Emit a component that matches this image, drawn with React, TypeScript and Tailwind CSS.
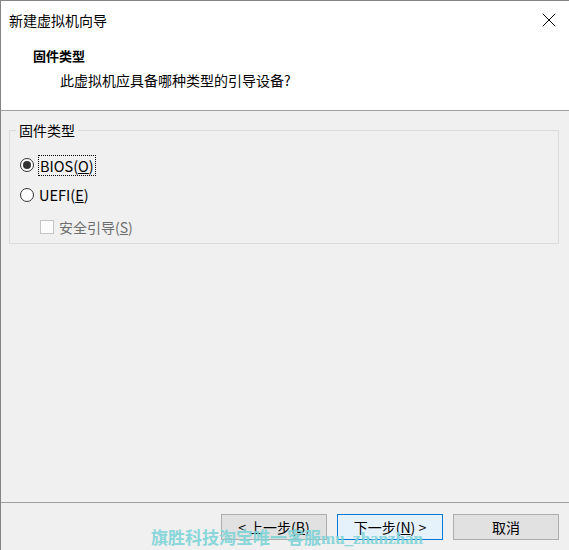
import { X } from "lucide-react";

const font = { fontFamily: '"Noto Sans CJK SC", "Noto Sans", sans-serif' };

function Radio({ checked }: { checked?: boolean }) {
  return (
    <span className="w-[14px] h-[14px] rounded-full border border-[#333333] bg-white flex items-center justify-center shrink-0">
      {checked && <span className="w-[8px] h-[8px] rounded-full bg-[#333333]" />}
    </span>
  );
}

function WizardButton({ children, primary }: { children: React.ReactNode; primary?: boolean }) {
  return (
    <button
      type="button"
      className={
        primary
          ? "w-[106px] h-[26px] border border-[#0078d7] bg-[#e5f1fb] text-[14px] leading-none text-black"
          : "w-[106px] h-[26px] border border-[#adadad] bg-[#e1e1e1] text-[14px] leading-none text-black"
      }
    >
      {children}
    </button>
  );
}

export default function App() {
  return (
    <div
      className="relative w-[569px] h-[550px] bg-[#f0f0f0] border-l border-t border-[#858585] flex flex-col overflow-hidden text-black"
      style={font}
    >
      {/* white header with title and page caption */}
      <div className="h-[110px] shrink-0 bg-white border-b border-[#a0a0a0] flex flex-col">
        <div className="h-[38px] flex items-center justify-between pl-[8px] pr-[8px]">
          <span className="text-[14px] leading-[20px]">新建虚拟机向导</span>
          <X className="w-[24px] h-[24px] text-black" strokeWidth={1} />
        </div>
        <div className="mt-[7px] pl-[32px] text-[13px] leading-[20px] font-bold">固件类型</div>
        <div className="mt-[4px] pl-[59px] text-[14px] leading-[20px]">此虚拟机应具备哪种类型的引导设备?</div>
      </div>

      {/* firmware options */}
      <fieldset className="mt-[9px] ml-[8px] w-[550px] border border-[#dcdcdc] px-[6px] pb-[5px] pt-[14px]">
        <legend className="px-[3px] text-[14px] leading-[20px]">固件类型</legend>
        <div className="flex flex-col pl-[4px]">
          <div className="h-[22px] flex items-center gap-[4px]">
            <Radio checked />
            <span className="border border-dotted border-black px-[1px] text-[14.5px] leading-[19px]">
              BIOS(<span className="underline">O</span>)
            </span>
          </div>
          <div className="mt-[8px] h-[22px] flex items-center gap-[5px]">
            <Radio />
            <span className="text-[14.5px] leading-[20px]">
              UEFI(<span className="underline">E</span>)
            </span>
          </div>
          <div className="mt-[10px] h-[22px] flex items-center gap-[5px] pl-[20px]">
            <span className="w-[14px] h-[14px] border border-[#c4c4c4] bg-[#fcfcfc] shrink-0" />
            <span className="text-[14px] leading-[20px] text-[#6d6d6d]">
              安全引导(<span className="underline">S</span>)
            </span>
          </div>
        </div>
      </fieldset>

      <div className="flex-1" />

      {/* navigation buttons */}
      <div className="h-[48px] shrink-0 border-t border-[#a0a0a0] flex justify-end items-start gap-[10px] pt-[11px] pr-[10px]">
        <WizardButton>
          {"< 上一步("}
          <span className="underline">B</span>)
        </WizardButton>
        <WizardButton primary>
          下一步(<span className="underline">N</span>)
          {" >"}
        </WizardButton>
        <WizardButton>取消</WizardButton>
      </div>

      <div
        className="absolute left-[150px] top-[528px] text-[17px] leading-[20px] font-bold text-[#7fd4d8] opacity-90 pointer-events-none whitespace-nowrap"
        style={{ fontFamily: '"Liberation Serif", "Noto Sans CJK SC", serif' }}
      >
        旗胜科技淘宝唯一客服mu_zhanzhan
      </div>
    </div>
  );
}
